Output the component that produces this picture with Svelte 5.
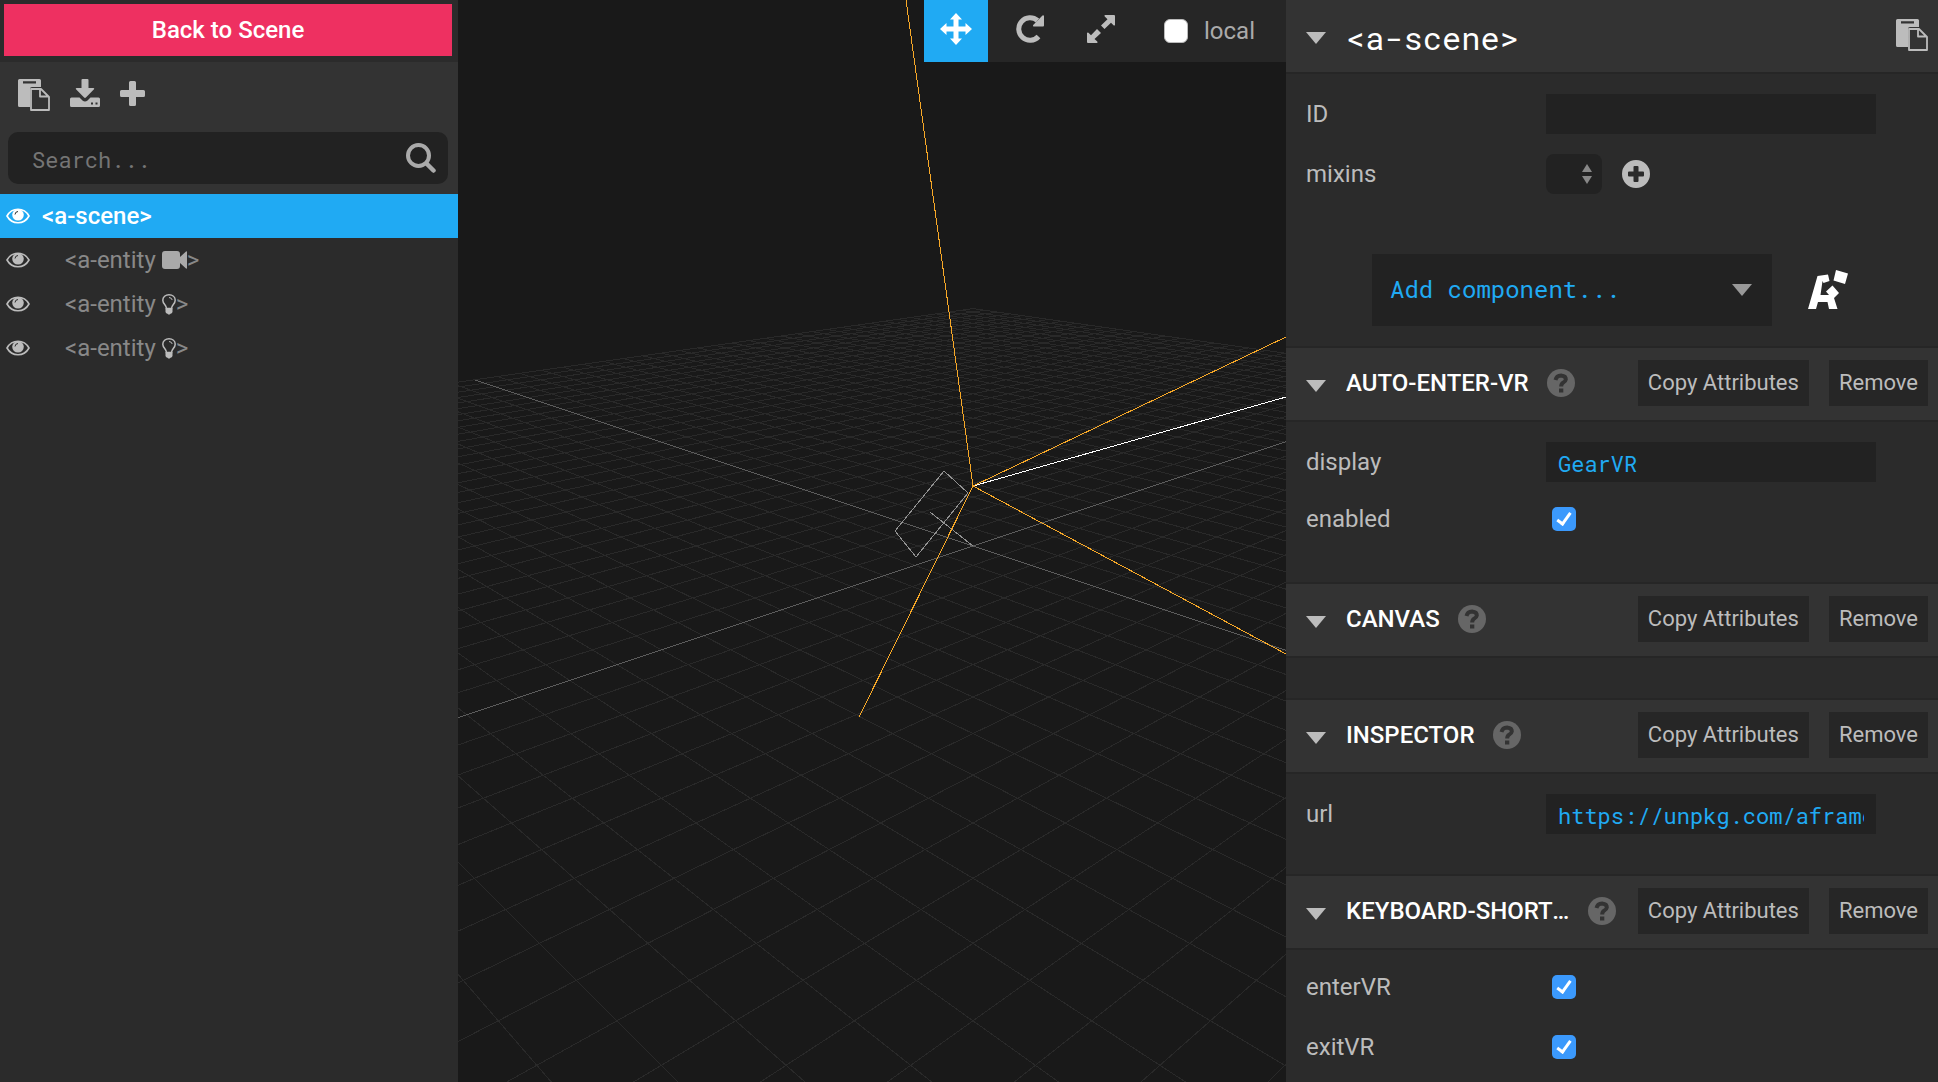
<script>
  const F = 1175, CX = 973, CY = 546, D = 30, NEAR = 1, R2 = Math.SQRT2;
  const cam = (x, z) => ({ r: (x - z) / R2, u: -(x + z) / (3 * R2), d: D - (2 * (x + z)) / 3 });

  // Projects one ground line, cut where it would pass behind the camera.
  function ground(x1, z1, x2, z2) {
    let a = cam(x1, z1), b = cam(x2, z2);
    if (a.d < NEAR && b.d < NEAR) return '';
    const cut = (p, q) => {
      const t = (NEAR - p.d) / (q.d - p.d);
      return { r: p.r + t * (q.r - p.r), u: p.u + t * (q.u - p.u), d: NEAR };
    };
    if (a.d < NEAR) a = cut(a, b);
    else if (b.d < NEAR) b = cut(b, a);
    const pt = (p) => `${(CX + (F * p.r) / p.d).toFixed(1)} ${(CY - (F * p.u) / p.d).toFixed(1)}`;
    return `M${pt(a)}L${pt(b)}`;
  }

  const S = 30;
  let grid = '';
  for (let i = -S; i <= S; i++) {
    if (i !== 0) grid += ground(i, -S, i, S) + ground(-S, i, S, i);
  }
  const axes = ground(0, -S, 0, S) + ground(-S, 0, S, 0);

  const entities = ['camera', 'light', 'light'];
  const sections = [
    { name: 'AUTO-ENTER-VR', fields: [
      { name: 'display', value: 'GearVR' },
      { name: 'enabled', checked: true }
    ] },
    { name: 'CANVAS', fields: [] },
    { name: 'INSPECTOR', fields: [
      { name: 'url', value: 'https://unpkg.com/aframe-inspector' }
    ] },
    { name: 'KEYBOARD-SHORTCUTS', fields: [
      { name: 'enterVR', checked: true },
      { name: 'exitVR', checked: true }
    ] }
  ];
</script>

{#snippet eye()}
  <svg class="eye" viewBox="0 0 24 16" aria-hidden="true">
    <path d="M1 8C6-1 18-1 23 8C18 17 6 17 1 8Z" fill="none" stroke="currentColor" stroke-width="1.6" />
    <circle cx="12" cy="6.800" r="5.800" fill="currentColor" />
    <path d="M9 6.500A3.200 3.200 0 0 1 12 3.500" fill="none" stroke="#2b2b2b" stroke-width="1" />
  </svg>
{/snippet}

{#snippet clipboard()}
  <svg class="clipboard" viewBox="0 0 32 32" aria-hidden="true">
    <path fill="currentColor" fill-rule="evenodd" d="M1.500 0H21.500Q23 0 23 1.500V8H14Q12 8 12 10V28H1.500Q0 28 0 26.500V1.500Q0 0 1.500 0ZM5 2.200V4.500H18V2.200Z" />
    <path fill="none" stroke="currentColor" stroke-width="1.800" stroke-linejoin="round" d="M13 10H23L31 18V31H13ZM22 10V17.500H31" />
  </svg>
{/snippet}

<div class="inspector">
  <aside class="scenegraph">
    <div class="back"><button type="button">Back to Scene</button></div>
    <div class="tools">
      <div class="actions">
        <button type="button" aria-label="Copy scene">{@render clipboard()}</button>
        <button type="button" aria-label="Export">
          <svg class="download" viewBox="0 0 30 28" aria-hidden="true">
            <path fill="currentColor" d="M12.500 0H17.500Q18.500 0 18.500 1V9H23.500Q24.800 9.200 24 10.200L15.900 18.500Q15 19.300 14.100 18.500L6 10.200Q5.200 9.200 6.500 9H11.500V1Q11.500 0 12.500 0Z" />
            <path fill="currentColor" fill-rule="evenodd" d="M1.500 18.500H9.500L12.500 21.500Q15 23.500 17.500 21.500L20.500 18.500H28.500Q30 18.500 30 20V26.500Q30 28 28.500 28H1.500Q0 28 0 26.500V20Q0 18.500 1.500 18.500ZM21 23.500V25.500H23V23.500ZM25.500 23.500V25.500H27.500V23.500Z" />
          </svg>
        </button>
        <button type="button" aria-label="Add entity">
          <svg class="plus" viewBox="0 0 25 25" aria-hidden="true">
            <path fill="currentColor" d="M10.500 0H14.500Q16 0 16 1.500V9H23.500Q25 9 25 10.500V14.500Q25 16 23.500 16H16V23.500Q16 25 14.500 25H10.500Q9 25 9 23.500V16H1.500Q0 16 0 14.500V10.500Q0 9 1.500 9H9V1.500Q9 0 10.500 0Z" />
          </svg>
        </button>
      </div>
      <div class="search">
        <input type="text" placeholder="Search..." aria-label="Search" />
        <svg class="glass" viewBox="0 0 30 30" aria-hidden="true">
          <g fill="none" stroke="currentColor" stroke-linecap="round">
            <circle cx="12.500" cy="12.500" r="10.500" stroke-width="4" />
            <path d="M20.500 20.500L27.500 27.500" stroke-width="4.500" />
          </g>
        </svg>
      </div>
    </div>
    <ul class="outliner">
      <li class="row active">{@render eye()}<span>&lt;a-scene&gt;</span></li>
      {#each entities as kind}
        <li class="row child">
          {@render eye()}
          <span>&lt;a-entity</span>
          {#if kind === 'camera'}
            <svg class="video" viewBox="0 0 25 18" aria-hidden="true">
              <path fill="currentColor" d="M3 0H15Q18 0 18 3V6L24 .5Q25 0 25 1V17Q25 18 24 17.500L18 12V15Q18 18 15 18H3Q0 18 0 15V3Q0 0 3 0Z" />
            </svg>
          {:else}
            <svg class="bulb" viewBox="0 0 14 21" aria-hidden="true">
              <path fill="none" stroke="currentColor" stroke-width="1.500" d="M4.500 14.500C4.500 11 .8 10 .8 6.200C.8 3 3.500 .8 7 .8S13.200 3 13.200 6.200C13.200 10 9.500 11 9.500 14.500Z" />
              <path fill="none" stroke="currentColor" stroke-width="1" d="M7 3.500Q9.800 3.700 10.200 6" />
              <path fill="currentColor" d="M3.500 14H10.500V18Q10 19.500 8.500 19.700Q7 21.500 5.500 19.700Q4 19.500 3.500 18Z" />
            </svg>
          {/if}
          <span class="end">&gt;</span>
        </li>
      {/each}
    </ul>
  </aside>

  <main class="viewport">
    <svg class="scene" viewBox="458 0 828 1082" preserveAspectRatio="xMidYMid slice" aria-label="Scene view">
      <g fill="none" stroke-width="1" shape-rendering="crispEdges">
        <path d={grid} stroke="#292929" />
        <path d={axes} stroke="#5c5c5c" />
        <path d="M944 471L968 493L916 557L895 531ZM930 512L973 546" stroke="#929292" />
        <path d="M973 486L1286 397" stroke="#fff" />
        <path d="M973 486L906 0M973 486L1286 337M973 486L1286 654M973 486L859 717" stroke="#f7a827" />
      </g>
    </svg>
    <div class="toolbar">
      <button type="button" class="on" aria-label="Translate">
        <svg viewBox="0 0 32 32" aria-hidden="true">
          <path fill="currentColor" d="M16 0L22 6.500H18.500V13.500H25.500V10L32 16L25.500 22V18.500H18.500V25.500H22L16 32L10 25.500H13.500V18.500H6.500V22L0 16L6.500 10V13.500H13.500V6.500H10Z" />
        </svg>
      </button>
      <button type="button" class="rotate" aria-label="Rotate">
        <svg viewBox="0 0 32 32" aria-hidden="true">
          <path fill="none" stroke="currentColor" stroke-width="5" d="M24.500 23.500A11.300 11.300 0 1 1 23.500 7.500" />
          <path fill="currentColor" d="M30 3V12.500Q30 13.500 29 13.500H19.500Q18.500 13 19.200 12L28.500 2.500Q29.700 2 30 3Z" />
        </svg>
      </button>
      <button type="button" class="scale" aria-label="Scale">
        <svg viewBox="0 0 32 32" aria-hidden="true">
          <path fill="currentColor" d="M20 2H29Q30 2 30 3V12Q29.500 13 28.500 12.300L26 9.800L19.500 16L16 12.500L22.500 6.300L19.700 3.500Q19 2.300 20 2ZM12 16L16 20L9.500 26L12.300 28.500Q13 29.700 12 30H3Q2 30 2 29V20Q2.500 19 3.500 19.700L6 22.200Z" />
        </svg>
      </button>
      <label><input type="checkbox" />local</label>
    </div>
  </main>

  <aside class="panel">
    <header class="head title">
      <button type="button" class="fold" aria-label="Collapse"></button>
      <h1>&lt;a-scene&gt;</h1>
      <button type="button" class="copy" aria-label="Copy entity">{@render clipboard()}</button>
    </header>
    <div class="fields">
      <div class="field"><label for="id">ID</label><input id="id" type="text" /></div>
      <div class="field">
        <label for="mixins">mixins</label>
        <div class="mixins">
          <span class="picker">
            <select id="mixins"><option></option></select>
            <svg viewBox="0 0 10 20" aria-hidden="true"><path fill="currentColor" d="M5 0L10 8H0ZM0 12H10L5 20Z" /></svg>
          </span>
          <button type="button" aria-label="Add mixin">
            <svg class="round" viewBox="0 0 28 28" aria-hidden="true">
              <path fill="currentColor" fill-rule="evenodd" d="M14 0A14 14 0 1 1 14 28A14 14 0 1 1 14 0ZM12.500 6Q11.500 6 11.500 7V11.500H7Q6 11.500 6 12.500V15.500Q6 16.500 7 16.500H11.500V21Q11.500 22 12.500 22H15.500Q16.500 22 16.500 21V16.500H21Q22 16.500 22 15.500V12.500Q22 11.500 21 11.500H16.500V7Q16.500 6 15.500 6Z" />
            </svg>
          </button>
        </div>
      </div>
    </div>
    <div class="add">
      <button type="button" class="combo">Add component...<i class="arrow"></i></button>
      <a href="#registry" aria-label="Registry">
        <svg class="logo" viewBox="0 0 40 40" aria-hidden="true">
          <path fill="currentColor" d="M0 39L9.500 6L20 4.500L21.500 11L15.500 13L14.500 11L12.500 25H21L18 21.500L24.500 15.500L31 23L26 28L29.500 39H21L19.500 32H10L8 39ZM28 0L40 3.500L37 14L25.500 10.500Z" />
        </svg>
      </a>
    </div>
    {#each sections as s}
      <section>
        <header class="head">
          <button type="button" class="fold" aria-label="Collapse"></button>
          <h2>{s.name}</h2>
          <a class="help" href="#docs" aria-label="Help">
            <svg class="round" viewBox="0 0 28 28" aria-hidden="true">
              <circle cx="14" cy="14" r="14" fill="#666" />
              <path fill="none" stroke="#333" stroke-width="4" d="M8.500 11Q9.500 6.500 14 6.500Q19 7 18.800 10.500Q18.500 12.500 16 13.800Q14.200 14.800 14.200 17.500" />
              <path fill="#333" d="M12 19.500H16.300V23.500H12Z" />
            </svg>
          </a>
          <span class="space"></span>
          <button type="button" class="action">Copy Attributes</button>
          <button type="button" class="action">Remove</button>
        </header>
        <div class="fields">
          {#each s.fields as f}
            <div class="field" class:check={f.checked}>
              <label for={f.name}>{f.name}</label>
              {#if f.checked}
                <input id={f.name} type="checkbox" checked />
              {:else}
                <input id={f.name} type="text" value={f.value} />
              {/if}
            </div>
          {/each}
        </div>
      </section>
    {/each}
  </aside>
</div>

<style>
  :global(body) { margin: 0; background: #191919; }
  .inspector {
    display: flex; height: 100vh; overflow: hidden;
    font-family: Roboto, "Liberation Sans", sans-serif; font-size: 24px; line-height: 28px; color: #bcbcbc;
    --mono: "Roboto Mono", "DejaVu Sans Mono", monospace;
    --blue: #20aaf3;
  }
  svg { display: block; flex: none; }
  button { border: 0; margin: 0; padding: 0; background: none; color: inherit; font: inherit; cursor: pointer; }
  input { box-sizing: border-box; border: 0; outline: 0; margin: 0; }
  a { color: inherit; }

  .scenegraph { flex: none; width: 458px; background: #2b2b2b; }
  .back { padding: 4px 6px 6px 4px; }
  .back button { display: block; width: 100%; height: 52px; background: #ee3061; color: #fff; font-weight: 500; }
  .tools { background: #333; padding: 17px 10px 10px 8px; }
  .actions { display: flex; align-items: flex-start; gap: 20px; padding-left: 10px; height: 53px; }
  .clipboard { width: 32px; height: 32px; }
  .download { width: 30px; height: 28px; }
  .plus { width: 25px; height: 25px; padding-top: 2px; }
  .search { display: flex; align-items: center; background: #222; border-radius: 10px; padding-right: 12px; color: #aaa; }
  .search input { flex: 1; min-width: 0; height: 52px; padding: 2px 0 0 24px; background: none; color: #ccc; font: 22px var(--mono); }
  .search input::placeholder { color: #757575; }
  .glass { width: 30px; height: 30px; }
  .outliner { list-style: none; margin: 0; padding: 0; }
  .row { display: flex; align-items: center; height: 44px; padding-left: 6px; }
  .eye { width: 24px; height: 16px; margin-right: 12px; }
  .active { background: var(--blue); color: #fff; font-weight: 500; }
  .child .eye { margin-right: 35px; }
  .child span { color: #888; }
  .video { width: 25px; height: 18px; margin-left: 6px; color: #aaa; }
  .bulb { width: 14px; height: 21px; margin-left: 6px; }

  .viewport { position: relative; flex: 1; min-width: 0; background: #191919; }
  .scene { width: 100%; height: 100%; }
  .toolbar { position: absolute; top: 0; right: 0; display: flex; height: 62px; background: #262626; }
  .toolbar button { display: flex; justify-content: center; width: 64px; padding-top: 13px; }
  .toolbar .rotate { width: 84px; }
  .toolbar .scale { width: 58px; }
  .toolbar .on { background: var(--blue); color: #fff; }
  .toolbar svg { width: 32px; height: 32px; }
  .toolbar label { display: flex; align-items: center; gap: 16px; padding: 0 31px 0 34px; color: #aaa; }
  .toolbar input { appearance: none; width: 24px; height: 24px; border-radius: 6px; background: #fff; border: 1px solid #bbb; }

  .panel { flex: none; width: 652px; background: #2b2b2b; overflow: hidden; }
  .head { box-sizing: border-box; display: flex; align-items: center; height: 76px; padding: 0 10px 2px 20px; background: #333; border: solid #262626; border-width: 2px 0; color: #fff; }
  .title { height: 74px; border-top: 0; }
  .fold, .arrow { flex: none; border: 10px solid transparent; border-top: 12px solid #bcbcbc; border-bottom: 0; }
  .fold { margin-top: 5px; }
  h1, h2 { margin: 0 0 0 20px; font: 500 24px/28px Roboto, "Liberation Sans", sans-serif; white-space: nowrap; }
  h1 { flex: 1; padding-top: 6px; font: 32px/44px var(--mono); }
  h2 { max-width: 224px; overflow: hidden; text-overflow: ellipsis; }
  .copy { color: #bcbcbc; }
  .help { margin-left: 18px; }
  .round { width: 28px; height: 28px; }
  .space { flex: 1; }
  .action { height: 46px; padding: 0 10px; background: #262626; color: #bcbcbc; font-size: 22px; white-space: nowrap; }
  .action + .action { margin-left: 20px; }
  .fields { padding: 20px 62px 20px 20px; }
  .field { box-sizing: border-box; display: flex; align-items: center; height: 40px; margin-bottom: 20px; }
  .check { padding-bottom: 6px; }
  .field > label { width: 240px; flex: none; }
  .field input[type="text"] { flex: 1; min-width: 0; height: 40px; padding: 2px 12px 0; background: #222; color: var(--blue); font: 22px var(--mono); }
  .field input[type="checkbox"] { appearance: none; width: 24px; height: 24px; margin-left: 6px; border-radius: 5px; background: #3b99fc; display: grid; place-items: center; }
  .field input[type="checkbox"]::before { content: ""; width: 5px; height: 12px; margin-bottom: 3px; border: solid #fff; border-width: 0 3px 3px 0; transform: rotate(36deg); }
  .mixins { display: flex; align-items: center; gap: 20px; }
  .picker { position: relative; display: flex; color: #888; }
  .picker select { appearance: none; width: 56px; height: 40px; border: 0; border-radius: 8px; background: #222; color: #ccc; }
  .picker svg { position: absolute; right: 10px; top: 10px; width: 10px; height: 20px; pointer-events: none; }
  .add { display: flex; align-items: center; padding: 20px 0 20px 86px; gap: 36px; }
  .combo { display: flex; align-items: center; justify-content: space-between; width: 400px; height: 72px; padding: 0 20px 2px 18px; background: #222; color: var(--blue); font: 24px var(--mono); }
  .arrow { margin-top: 2px; border-top-color: #999; }
  .add a { color: #fff; }
  .logo { width: 40px; height: 40px; }
</style>
